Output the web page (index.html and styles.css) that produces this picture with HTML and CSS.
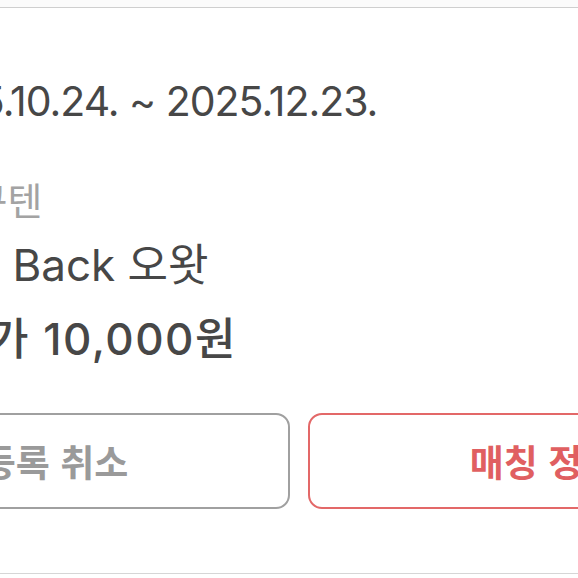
FILE: index.html
```html
<!DOCTYPE html>
<html lang="ko">
<head>
    <meta charset="UTF-8">
    <meta name="viewport" content="width=device-width, initial-scale=1.0">
    <title>매칭 상세</title>
    <link rel="stylesheet" href="styles.css">
</head>
<body>
    <div class="prev-item"></div>

    <div class="match-card">
        <div class="info">
            <div class="period">2025.10.24. ~ 2025.12.23.</div>
            <div class="category">상품 구텐</div>
            <div class="title">Cash Back 오왓</div>
            <div class="price">판매가 10,000원</div>
        </div>

        <div class="actions">
            <button class="btn btn-cancel">등록 취소</button>
            <button class="btn btn-edit">매칭 정보</button>
        </div>
    </div>
</body>
</html>
```

FILE: styles.css
```css
body {
    margin: 0;
    width: 578px;
    height: 578px;
    overflow: hidden;
    background-color: #fff;
    font-family: Inter, "Noto Sans CJK KR", sans-serif;
    color: #474747;
}
.prev-item {
    height: 7px;
    background-color: #fbfbfb;
    border-bottom: 1px solid #cfcfcf;
}
.match-card {
    padding: 68px 0 64px;
    border-bottom: 1px solid #d6d6d6;
}
.info {
    margin-left: -96px;
    white-space: nowrap;
}
.period {
    font-size: 41px;
    line-height: 50px;
    letter-spacing: -1px;
    text-indent: 3px;
}
.category {
    margin-top: 52px;
    font-size: 38px;
    line-height: 46px;
    color: #a3a3a3;
    text-indent: -12px;
}
.title {
    margin-top: 14px;
    font-size: 44px;
    line-height: 54px;
    text-indent: -10px;
}
.price {
    margin-top: 20px;
    font-size: 44px;
    line-height: 54px;
    font-weight: 500;
    letter-spacing: 1.5px;
    text-indent: 0;
}
.actions {
    display: flex;
    gap: 18px;
    margin-top: 47px;
    margin-left: -180px;
}
.btn {
    flex: 0 0 470px;
    height: 96px;
    background-color: #fff;
    border-radius: 14px;
    font-family: "Noto Sans CJK KR", sans-serif;
    font-size: 37px;
    font-weight: 700;
    cursor: pointer;
}
.btn-cancel {
    border: 2px solid #a0a0a0;
    color: #9a9a9a;
}
.btn-edit {
    border: 2px solid #e36868;
    color: #e05f61;
}
```
